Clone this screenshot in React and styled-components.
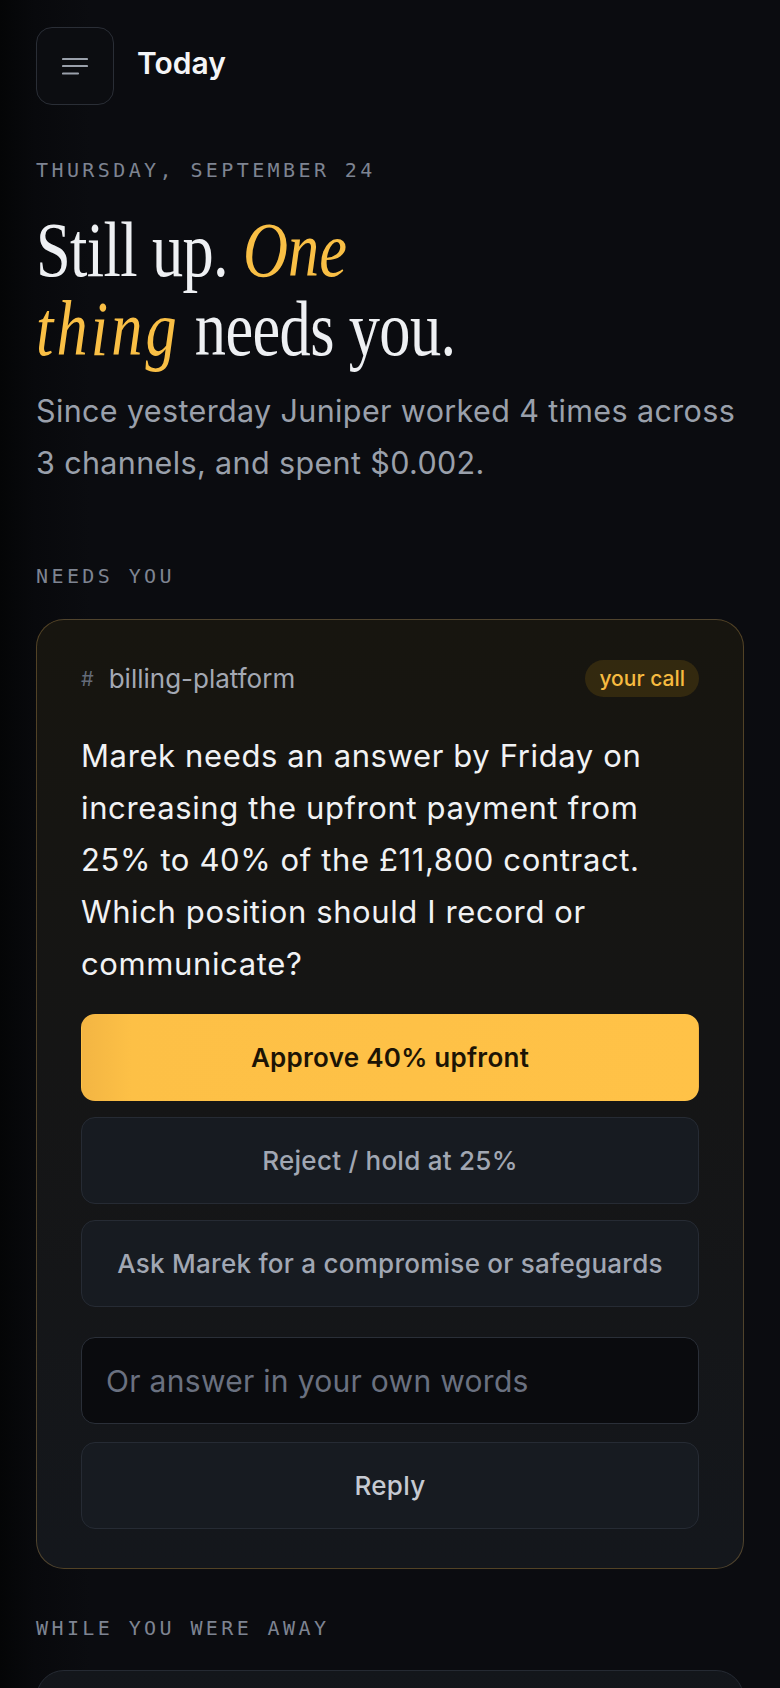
import React from 'react';
import styled, { createGlobalStyle } from 'styled-components';

const GlobalStyle = createGlobalStyle`
  html, body {
    margin: 0;
    padding: 0;
  }
  body {
    background: linear-gradient(90deg, #040506 0px, #08090c 34px, #0b0c10 90px, #0b0c10 100%);
    background-color: #0b0c10;
    color: #eef0f3;
    font-family: Inter, "Noto Sans", sans-serif;
    -webkit-font-smoothing: antialiased;
  }
  * {
    box-sizing: border-box;
  }
`;

const Page = styled.div`
  min-height: 100vh;
  padding: 27px 36px 80px;
`;

const TopBar = styled.header`
  display: flex;
  align-items: center;
  gap: 23px;
  height: 78px;
`;

const MenuButton = styled.button`
  width: 78px;
  height: 78px;
  border-radius: 16px;
  border: 1px solid #2a2e36;
  background: #0c0d11;
  display: flex;
  align-items: center;
  justify-content: center;
  padding: 0;
  cursor: pointer;
`;

const Title = styled.h1`
  margin: 0;
  padding-bottom: 6px;
  font-size: 30px;
  font-weight: 600;
  color: #f4f5f7;
  letter-spacing: 0;
`;

const MonoLabel = styled.div`
  font-family: "DejaVu Sans Mono", "Liberation Mono", monospace;
  font-size: 20px;
  line-height: 24px;
  letter-spacing: 0.17em;
  text-transform: uppercase;
  color: #7e8492;
  margin-top: ${(p) => p.$top}px;
  margin-bottom: ${(p) => p.$bottom || 0}px;
`;

const Headline = styled.h2`
  margin: 28px 0 0;
  font-family: "Liberation Serif", "DejaVu Serif", serif;
  font-weight: 400;
  font-size: 78px;
  line-height: 79px;
  letter-spacing: -0.01em;
  color: #eef0f3;
  transform: scaleX(0.8);
  transform-origin: left center;
  white-space: nowrap;
`;

const Accent = styled.em`
  font-style: italic;
  color: #f9bf45;
  letter-spacing: ${(p) => (p.$wide ? '0.05em' : '0')};
`;

const Summary = styled.p`
  margin: 17px 0 0;
  font-size: 30.5px;
  line-height: 52px;
  letter-spacing: 0.012em;
  color: #9aa0ab;
`;

const Card = styled.section`
  border-radius: 28px;
  border: 1px solid ${(p) => (p.$urgent ? 'rgba(196, 156, 82, 0.34)' : '#252a33')};
  background: ${(p) =>
    p.$urgent
      ? 'linear-gradient(180deg, #17150f 0%, #151515 45%, #14171c 100%)'
      : 'linear-gradient(180deg, #13161b 0%, #111318 100%)'};
  padding: 40px 44px 39px;
  min-height: ${(p) => (p.$urgent ? 'auto' : '240px')};
`;

const CardHead = styled.div`
  display: flex;
  align-items: center;
  justify-content: space-between;
  height: 37px;
`;

const Channel = styled.div`
  display: flex;
  align-items: center;
  gap: 15px;
  font-size: 26px;
  color: #a3a8b3;
`;

const Hash = styled.span`
  font-size: 20px;
  color: #646b78;
`;

const Pill = styled.span`
  display: inline-flex;
  align-items: center;
  height: 37px;
  padding: 0 14px;
  border-radius: 999px;
  background: #33290f;
  color: #f7bb40;
  font-size: 21px;
  font-weight: 500;
`;

const Question = styled.p`
  margin: 33px 0 24px;
  font-size: 31px;
  line-height: 52px;
  letter-spacing: 0.02em;
  color: #f1f2f4;
`;

const Choice = styled.button`
  display: flex;
  align-items: center;
  justify-content: center;
  width: 100%;
  height: 87px;
  border-radius: 14px;
  font-family: Inter, "Noto Sans", sans-serif;
  font-size: 26px;
  letter-spacing: 0.01em;
  cursor: pointer;
  border: 1px solid ${(p) => (p.$primary ? 'transparent' : '#262b34')};
  background: ${(p) =>
    p.$primary ? 'linear-gradient(90deg, #f3b543 0%, #fdc046 8%, #ffc247 100%)' : '#171b21'};
  color: ${(p) => (p.$primary ? '#1c1405' : p.$light ? '#c6cad2' : '#a1a7b3')};
  font-weight: ${(p) => (p.$primary ? 600 : 500)};
  margin-top: ${(p) => p.$gap || 0}px;
`;

const AnswerInput = styled.input`
  display: block;
  width: 100%;
  height: 87px;
  margin-top: 30px;
  padding: 0 24px;
  border-radius: 14px;
  border: 1px solid #2a2f38;
  background: #0a0b0e;
  color: #eef0f3;
  font-family: Inter, "Noto Sans", sans-serif;
  font-size: 30px;
  letter-spacing: 0.01em;
  outline: none;

  &::placeholder {
    color: #6a7180;
  }
`;

const MenuIcon = () => (
  <svg width="26" height="18" viewBox="0 0 26 18" fill="none">
    <path d="M1 2h24M1 9h24M1 16.5h15" stroke="#9aa0ab" strokeWidth="2.2" strokeLinecap="round" />
  </svg>
);

export default function App() {
  return (
    <>
      <GlobalStyle />
      <Page>
        <TopBar>
          <MenuButton aria-label="Menu">
            <MenuIcon />
          </MenuButton>
          <Title>Today</Title>
        </TopBar>

        <MonoLabel $top={53}>Thursday, September 24</MonoLabel>
        <Headline>
          Still up. <Accent>One</Accent>
          <br />
          <Accent $wide>thing</Accent> needs you.
        </Headline>
        <Summary>
          Since yesterday Juniper worked 4 times across 3 channels, and spent $0.002.
        </Summary>

        <MonoLabel $top={75} $bottom={31}>Needs you</MonoLabel>
        <Card $urgent>
          <CardHead>
            <Channel>
              <Hash>#</Hash>
              billing-platform
            </Channel>
            <Pill>your call</Pill>
          </CardHead>
          <Question>
            Marek needs an answer by Friday on increasing the upfront payment from 25% to 40% of the
            £11,800 contract. Which position should I record or communicate?
          </Question>
          <Choice $primary>Approve 40% upfront</Choice>
          <Choice $gap={16}>Reject / hold at 25%</Choice>
          <Choice $gap={16}>Ask Marek for a compromise or safeguards</Choice>
          <AnswerInput placeholder="Or answer in your own words" />
          <Choice $gap={18} $light>
            Reply
          </Choice>
        </Card>

        <MonoLabel $top={47} $bottom={30}>While you were away</MonoLabel>
        <Card aria-label="Activity while you were away" />
      </Page>
    </>
  );
}
